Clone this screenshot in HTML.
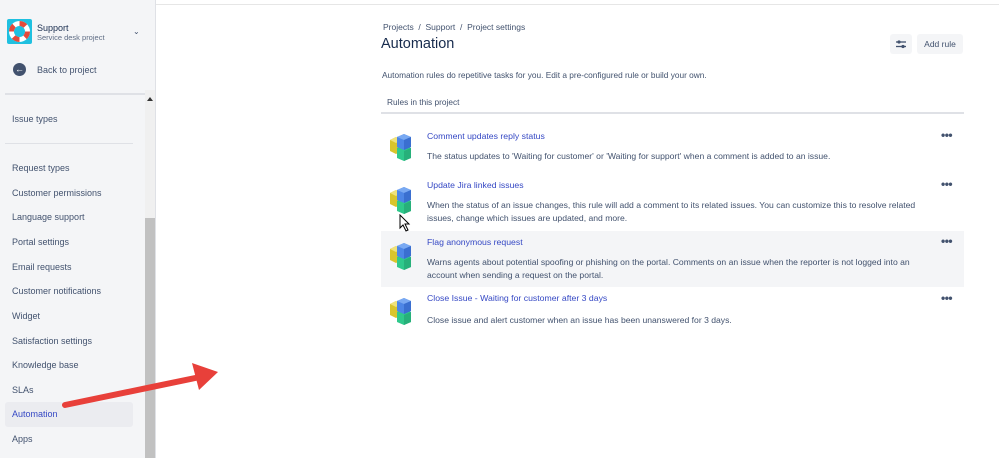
<!DOCTYPE html>
<html><head><style>
*{margin:0;padding:0;box-sizing:border-box}
body{width:999px;height:458px;overflow:hidden;background:#fff;font-family:"Liberation Sans",sans-serif;position:relative;color:#172b4d}
.sb{position:absolute;left:0;top:0;width:156px;height:458px;background:#f4f5f7;border-right:1px solid #dfe1e6}
.t{position:absolute;white-space:nowrap}
.nav{position:absolute;left:12px;font-size:9px;color:#42526e}
.scr{position:absolute;left:145px;top:90px;width:10px;height:368px;background:#f0f0f0}
.thumb{position:absolute;left:145px;top:218px;width:10px;height:240px;background:#c1c1c1}
.title{font-size:8.7px;color:#3548c4;position:absolute;left:427px}
.desc{font-size:8.6px;color:#42526e;position:absolute;left:427px;line-height:13px;width:515px}
.dots{position:absolute;left:941px;font-size:12px;font-weight:bold;color:#42526e;letter-spacing:-0.5px}
</style></head><body>
<div style="position:absolute;left:156px;top:4px;width:843px;height:1px;background:#e6e6e6"></div>
<div class="sb"></div>
<div class="scr"></div><div class="thumb"></div>
<div style="position:absolute;left:147px;top:97px;width:0;height:0;border-left:3px solid transparent;border-right:3px solid transparent;border-bottom:4px solid #333"></div>
<div style="position:absolute;left:7px;top:19px;width:25px;height:25px;background:#1fc0e0;border-radius:2px"></div>
<svg style="position:absolute;left:7px;top:19px" width="25" height="25"><circle cx="12.5" cy="12.5" r="8" fill="none" stroke="#fff" stroke-width="5"/><circle cx="12.5" cy="12.5" r="8" fill="none" stroke="#e5493a" stroke-width="5" stroke-dasharray="6.5 6"/></svg>
<div class="t" style="left:37px;top:23px;font-size:9px;color:#172b4d">Support</div>
<div class="t" style="left:37px;top:33px;font-size:7.5px;color:#5e6c84">Service desk project</div>
<div class="t" style="left:133px;top:27px;font-size:8px;color:#42526e">⌄</div>
<div style="position:absolute;left:13px;top:63px;width:13px;height:13px;border-radius:50%;background:#42526e;color:#fff;font-size:9px;line-height:13px;text-align:center">←</div>
<div class="t" style="left:37px;top:65px;font-size:9px;color:#42526e">Back to project</div>
<div style="position:absolute;left:5px;top:93px;width:140px;height:2px;background:#dfe1e6"></div>
<div class="nav" style="top:114px">Issue types</div>
<div style="position:absolute;left:5px;top:143px;width:128px;height:1px;background:#dfe1e6"></div>
<div class="nav" style="top:163px">Request types</div>
<div class="nav" style="top:188px">Customer permissions</div>
<div class="nav" style="top:212px">Language support</div>
<div class="nav" style="top:237px">Portal settings</div>
<div class="nav" style="top:262px">Email requests</div>
<div class="nav" style="top:286px">Customer notifications</div>
<div class="nav" style="top:311px">Widget</div>
<div class="nav" style="top:336px">Satisfaction settings</div>
<div class="nav" style="top:360px">Knowledge base</div>
<div class="nav" style="top:385px">SLAs</div>
<div style="position:absolute;left:5px;top:402px;width:128px;height:25px;background:#ebecf0;border-radius:3px"></div>
<div class="nav" style="top:409px;color:#3548c4">Automation</div>
<div class="nav" style="top:434px">Apps</div>
<svg style="position:absolute;left:55px;top:360px" width="170" height="60"><line x1="10" y1="45" x2="145" y2="17" stroke="#e8403a" stroke-width="6" stroke-linecap="round"/><polygon points="163,12 137,3 144,30" fill="#e8403a"/></svg>
<div class="t" style="left:383px;top:22px;font-size:8.5px;color:#42526e">Projects &nbsp;/&nbsp; Support &nbsp;/&nbsp; Project settings</div>
<div class="t" style="left:381px;top:36px;font-size:14.5px;color:#172b4d">Automation</div>
<div style="position:absolute;left:890px;top:34px;width:22px;height:20px;background:#f4f5f7;border-radius:3px"></div>
<svg style="position:absolute;left:895px;top:38px" width="12" height="12"><g stroke="#42526e" stroke-width="1.3"><line x1="1" y1="4" x2="11" y2="4"/><line x1="1" y1="8.5" x2="11" y2="8.5"/></g><circle cx="4" cy="4" r="1.6" fill="#42526e"/><circle cx="8" cy="8.5" r="1.6" fill="#42526e"/></svg>
<div style="position:absolute;left:917px;top:34px;width:46px;height:20px;background:#f4f5f7;border-radius:3px;font-size:8.5px;color:#42526e;text-align:center;line-height:20px">Add rule</div>
<div class="t" style="left:382px;top:70px;font-size:8.3px;color:#42526e">Automation rules do repetitive tasks for you. Edit a pre-configured rule or build your own.</div>
<div class="t" style="left:387px;top:97px;font-size:8.3px;color:#42526e">Rules in this project</div>
<div style="position:absolute;left:381px;top:112px;width:583px;height:2px;background:#dfe1e6"></div>
<div style="position:absolute;left:381px;top:231px;width:583px;height:56px;background:#f4f5f7"></div>
<svg width="0" height="0" style="position:absolute"><defs><g id="cube">
<polygon points="0,8 6,5 12,8 12,19 6,22 0,19" fill="#d9c52c"/><polygon points="0,8 6,5 12,8 6,11" fill="#efe27a"/>
<polygon points="7,16 14,13 21,16 21,26 14,29 7,26" fill="#2fc98c"/><polygon points="14,19 21,16 21,26 14,29" fill="#27b07a"/>
<polygon points="7,5 14,2 21,5 21,15 14,18 7,15" fill="#4d86e6"/><polygon points="7,5 14,2 21,5 14,8" fill="#79a9f2"/><polygon points="14,8 21,5 21,15 14,18" fill="#3a6fd0"/>
</g></defs></svg>
<svg style="position:absolute;left:390px;top:132px" width="24" height="30"><use href="#cube"/></svg>
<svg style="position:absolute;left:390px;top:185px" width="24" height="30"><use href="#cube"/></svg>
<svg style="position:absolute;left:390px;top:241px" width="24" height="30"><use href="#cube"/></svg>
<svg style="position:absolute;left:390px;top:296px" width="24" height="30"><use href="#cube"/></svg>
<div class="title" style="top:131px">Comment updates reply status</div>
<div class="desc" style="top:150px">The status updates to 'Waiting for customer' or 'Waiting for support' when a comment is added to an issue.</div>
<div class="dots" style="top:128px">•••</div>
<div class="title" style="top:180px">Update Jira linked issues</div>
<div class="desc" style="top:199px">When the status of an issue changes, this rule will add a comment to its related issues. You can customize this to resolve related issues, change which issues are updated, and more.</div>
<div class="dots" style="top:177px">•••</div>
<div class="title" style="top:237px">Flag anonymous request</div>
<div class="desc" style="top:256px">Warns agents about potential spoofing or phishing on the portal. Comments on an issue when the reporter is not logged into an account when sending a request on the portal.</div>
<div class="dots" style="top:234px">•••</div>
<div class="title" style="top:293px">Close Issue - Waiting for customer after 3 days</div>
<div class="desc" style="top:314px">Close issue and alert customer when an issue has been unanswered for 3 days.</div>
<div class="dots" style="top:291px">•••</div>
<svg style="position:absolute;left:399px;top:214px" width="12" height="18"><path d="M1 1 L1 14 L4 11 L7 17 L9 16 L6 10 L10 10 Z" fill="#fff" stroke="#000" stroke-width="1"/></svg>
</body></html>
